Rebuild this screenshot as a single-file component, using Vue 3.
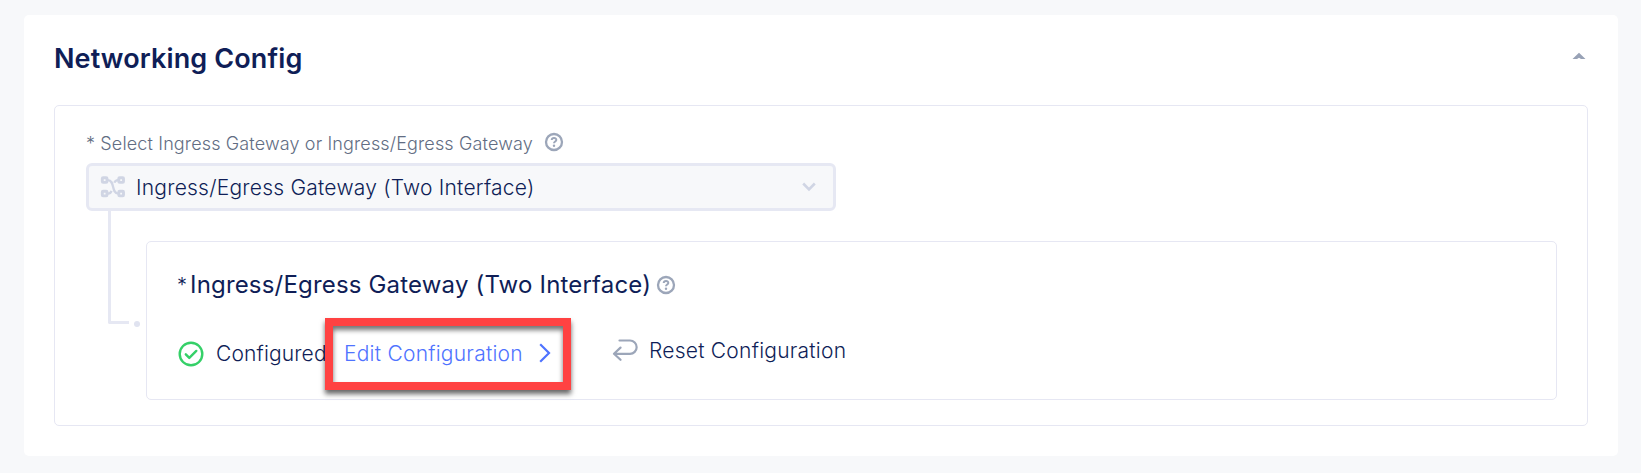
<script setup>
const label = '* Select Ingress Gateway or Ingress/Egress Gateway'
const mode = 'Ingress/Egress Gateway (Two Interface)'
</script>

<template>
  <main class="page">
    <section class="card">
      <header class="head">
        <h2 class="title"><span>Networking Config</span></h2>
        <svg class="collapse" width="14" height="8" viewBox="0 0 14 8"><path d="M.5 7 7 .8 13.500 7H9L7 5.800 5 7Z" fill="#98a2b6" /></svg>
      </header>

      <div class="group">
        <div class="label">
          <span>{{ label }}</span>
          <svg class="help" width="20" height="20" viewBox="0 0 20 20" fill="none" stroke="#9ca6b9" stroke-width="2.300">
            <circle cx="10" cy="10" r="8" />
            <path d="M7.700 8c.2-2.800 4.700-2.600 4.600 0-.1 1.600-2.300 1.500-2.300 3.300" stroke-width="2" />
            <circle cx="10" cy="13.800" r="1.200" fill="#9ca6b9" stroke="none" />
          </svg>
        </div>

        <div class="select">
          <svg class="net" width="26" height="22" viewBox="0 0 26 22" fill="none" stroke="#d0d5e4" stroke-width="2.900">
            <rect x="2.300" y="1.700" width="4.700" height="4.700" rx=".8" />
            <rect x="18.800" y="1.700" width="4.700" height="4.700" rx=".8" />
            <rect x="2.300" y="15.200" width="4.700" height="4.700" rx=".8" />
            <rect x="18.800" y="15.200" width="4.700" height="4.700" rx=".8" />
            <path d="M7.800 4.100c7.500 0 3 13.500 10.500 13.500M18.100 4.100c-2.200 0-3.200 1-3.700 2.700M7.800 17.600c2.200 0 3.200-1 3.700-2.700" stroke-width="2.300" />
          </svg>
          <span class="value">{{ mode }}</span>
          <svg class="down" width="14" height="10" viewBox="0 0 14 10" fill="none" stroke="#d0d5e4" stroke-width="2.600"><path d="M1.200 1.500 7 7.300l5.800-5.800" /></svg>
        </div>

        <div class="branch">
          <div class="rail"><i class="elbow"></i><i class="dot"></i></div>
          <div class="panel">
            <h3 class="subtitle">
              <span class="star">*</span><span class="name">{{ mode }}</span>
              <svg class="help small" width="20" height="20" viewBox="0 0 20 20" fill="none" stroke="#9ca6b9" stroke-width="2.300">
                <circle cx="10" cy="10" r="8" />
                <path d="M7.700 8c.2-2.800 4.700-2.600 4.600 0-.1 1.600-2.300 1.500-2.300 3.300" stroke-width="2" />
                <circle cx="10" cy="13.800" r="1.200" fill="#9ca6b9" stroke="none" />
              </svg>
            </h3>
            <div class="actions">
              <svg class="ok" width="26" height="26" viewBox="0 0 26 26" fill="none" stroke="#35d068" stroke-width="2.400">
                <circle cx="13" cy="13" r="11.300" />
                <path d="m7.800 13.300 3.500 3.600 7-7" stroke-linecap="round" stroke-linejoin="round" />
              </svg>
              <span class="state">Configured</span>
              <a class="edit">
                <span>Edit Configuration</span>
                <svg width="12" height="20" viewBox="0 0 12 20" fill="none" stroke="#4f73ff" stroke-width="2.200"><path d="m1.200 1.300 8.800 8.700-8.800 8.700" /></svg>
              </a>
              <a class="reset">
                <svg width="26" height="22" viewBox="0 0 26 22" fill="none" stroke="#9ca6b9" stroke-width="2.200" stroke-linecap="round" stroke-linejoin="round"><path d="M7.500 1.500h10.500a6.600 6.600 0 0 1 0 13.300H2M8.500 8.600 2 14.800 8.500 20.800" /></svg>
                <span>Reset Configuration</span>
              </a>
            </div>
          </div>
        </div>
      </div>
    </section>
  </main>
</template>

<style>
body { background: #f7f8fa; }
</style>

<style scoped>
.page {
  box-sizing: border-box;
  height: 473px;
  padding: 15px 23px 17px 24px;
  background: #f7f8fa;
  font-family: Inter, "Liberation Sans", sans-serif;
  color: #0f1e57;
}
.page * { box-sizing: border-box; }
.page svg { display: block; flex: none; }
.page span { white-space: nowrap; }
.card {
  height: 441px;
  padding: 26px 30px 30px;
  background: #fff;
  border-radius: 5px;
}
.head {
  display: flex;
  justify-content: space-between;
  height: 64px;
}
.title {
  margin: 0;
  padding-top: 1px;
  font-size: 27px;
  line-height: 34px;
  font-weight: 600;
  letter-spacing: .12px;
}
.collapse { margin: 11px 2px 0 0; }
.group {
  height: 321px;
  padding: 26px 30px 0 31px;
  border: 1px solid #e6e7f3;
  border-radius: 5px;
}
.label {
  display: flex;
  align-items: center;
  gap: 11px;
  height: 24px;
  margin-bottom: 7px;
  font-size: 18px;
  line-height: 24px;
  font-weight: 300;
  letter-spacing: .14px;
  color: #626d83;
}
.label .help { margin-top: -5px; }
.select {
  display: flex;
  align-items: center;
  width: 750px;
  height: 48px;
  padding: 0 17px 0 11px;
  border: 3px solid #e6e8f3;
  border-radius: 6px;
  background: #f7f8fa;
}
.value { margin-left: 10px; font-size: 21px; font-weight: 300; letter-spacing: .23px; }
.down { margin-left: auto; }
.branch { display: flex; }
.rail {
  display: flex;
  align-items: flex-end;
  gap: 5px;
  width: 60px;
  height: 116px;
  padding-left: 22px;
}
.elbow {
  width: 21px;
  height: 113px;
  margin-bottom: 3px;
  border: solid #e6e8f3;
  border-width: 0 0 3px 3px;
  border-bottom-left-radius: 2px;
}
.dot { width: 6px; height: 6px; border-radius: 50%; background: #e0e3f0; }
.panel {
  flex: 1;
  height: 159px;
  margin-top: 30px;
  padding: 28px 31px 0;
  border: 1px solid #e6e7f3;
  border-radius: 5px;
}
.subtitle {
  display: flex;
  align-items: center;
  height: 30px;
  margin: 0 0 18px;
  font-size: 24px;
  line-height: 30px;
  font-weight: 400;
  letter-spacing: .18px;
}
.star { width: 12px; margin-left: -1px; font-size: 20px; font-weight: 300; }
.name { margin-left: 1px; }
.small { margin-left: 5px; }
.actions {
  display: flex;
  align-items: center;
  height: 72px;
  font-size: 21px;
  line-height: 26px;
  font-weight: 300;
  letter-spacing: .24px;
}
.ok { margin: -1px 0 0 0; }
.state { width: 109px; margin: 0 0 0 12px; letter-spacing: .14px; }
.edit {
  display: flex;
  align-items: center;
  justify-content: space-between;
  width: 246px;
  height: 72px;
  padding: 0 12px 0 11px;
  border: 8px solid #ff4242;
  color: #4f73ff;
  box-shadow: 0 4px 5px rgba(0, 0, 0, .6), inset 0 4px 5px rgba(0, 0, 0, .55);
}
.edit svg { margin-top: -2px; }
.reset {
  display: flex;
  align-items: center;
  gap: 11px;
  margin: 0 0 6px 41px;
}
.reset svg { margin-top: -2px; }
</style>
